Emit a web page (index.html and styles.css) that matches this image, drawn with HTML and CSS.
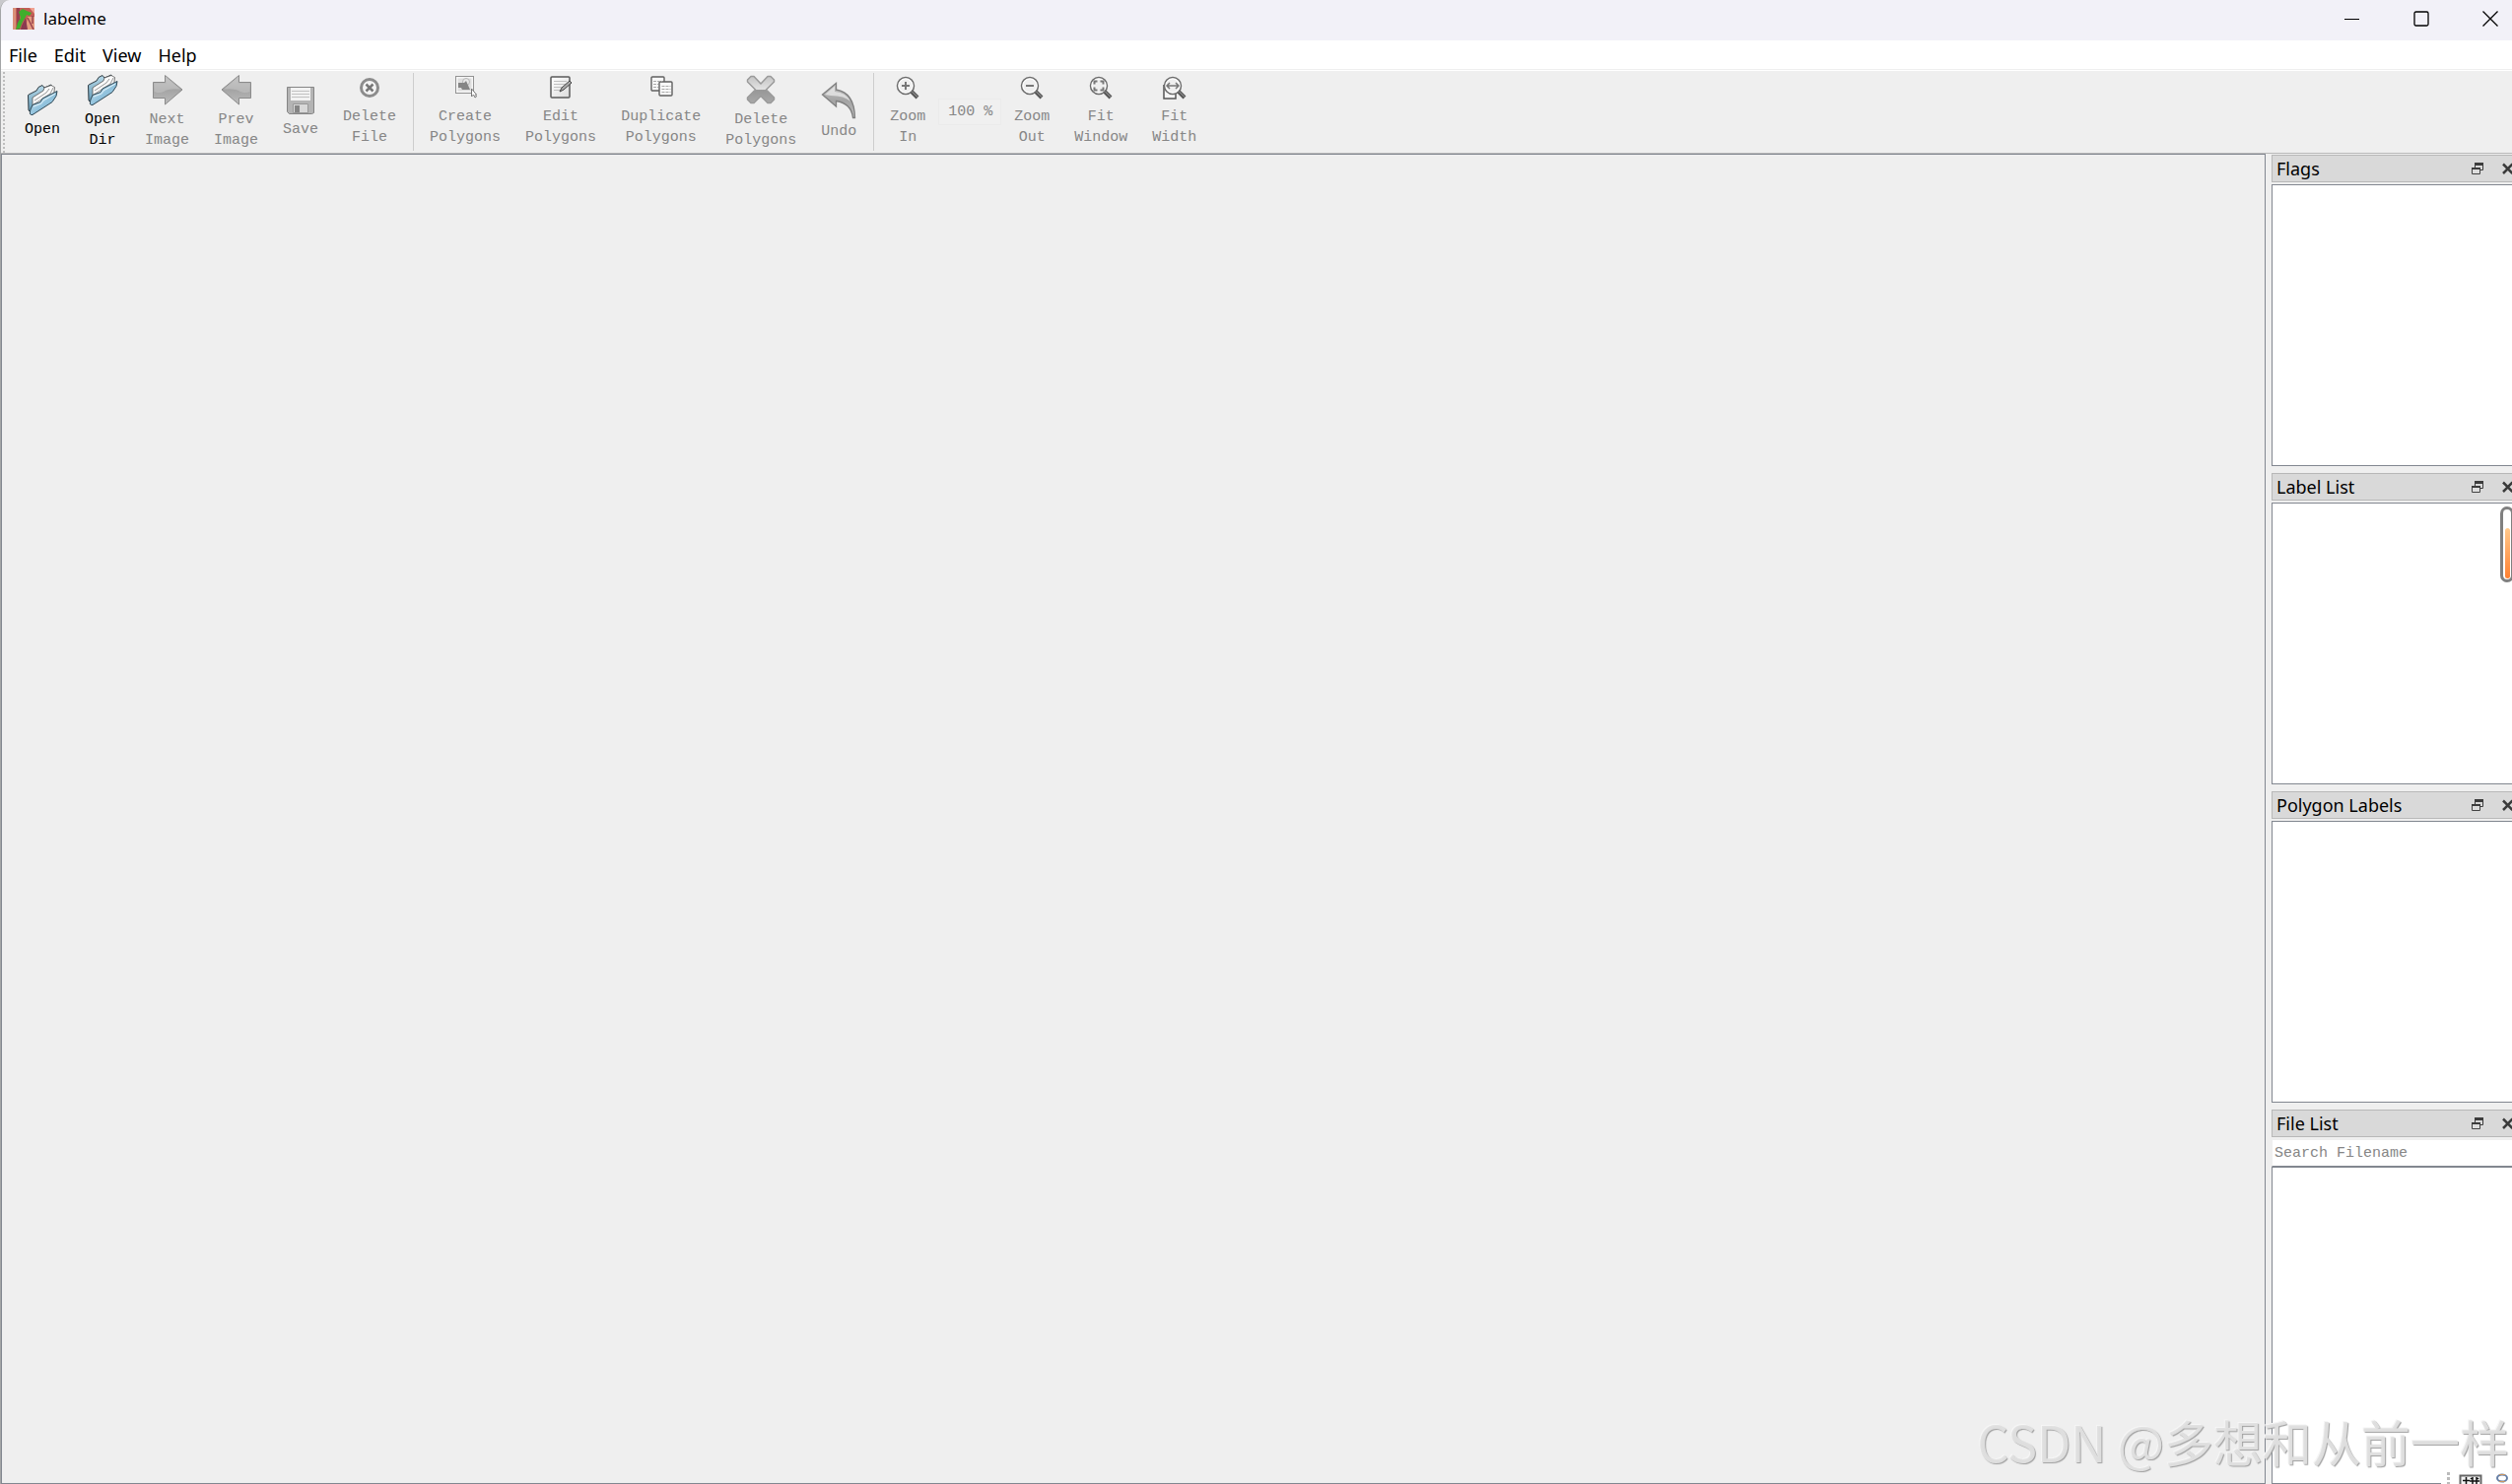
FILE: index.html
```html
<!DOCTYPE html>
<html lang="en">
<head>
<meta charset="utf-8">
<title>labelme</title>
<link rel="stylesheet" href="styles.css">
</head>
<body>
<svg class="defs" aria-hidden="true">
  <defs>
    <linearGradient id="blue" x1="0" y1="0" x2="1" y2="1"><stop offset="0" stop-color="#d8edf6"/><stop offset=".55" stop-color="#8fc1dc"/><stop offset="1" stop-color="#b5dcee"/></linearGradient>
    <linearGradient id="blue2" x1="0" y1="0" x2="0" y2="1"><stop offset="0" stop-color="#b7d9e8"/><stop offset="1" stop-color="#5f97b4"/></linearGradient>
    <linearGradient id="gray" x1="0" y1="0" x2="0" y2="1"><stop offset="0" stop-color="#c6c6c6"/><stop offset=".5" stop-color="#a4a4a4"/><stop offset="1" stop-color="#bcbcbc"/></linearGradient>
    <linearGradient id="cross" x1="0" y1="0" x2="0" y2="1"><stop offset="0" stop-color="#c4c4c4"/><stop offset=".48" stop-color="#e2e2e2"/><stop offset=".52" stop-color="#979797"/><stop offset="1" stop-color="#a8a8a8"/></linearGradient>
    <linearGradient id="sheet" x1="0" y1="0" x2="1" y2="1"><stop offset="0" stop-color="#ffffff"/><stop offset="1" stop-color="#dcdcdc"/></linearGradient>
    <linearGradient id="orange" x1="0" y1="0" x2="0" y2="1"><stop offset="0" stop-color="#ffc98c"/><stop offset="1" stop-color="#ff8030"/></linearGradient>
    <symbol id="folder" viewBox="0 0 32 36">
      <path d="M1.500 11.500 3 10.500 10 7 12 3.500 16 1.500 18 4 25 1l1 3v8L6 31 2 27z" fill="url(#blue2)" stroke="#2f3b42"/>
      <path d="M6 14 17 7l1-3 7-2.500 1.500 1 2 1-1 9L6 28z" fill="#fafafa" stroke="#555" stroke-width=".8"/>
      <path d="M8 17 20 9l3-4M7 21 24 10l3-6" fill="none" stroke="#999"/>
      <path d="M4.500 31.500Q2.500 31 4 26L6 21.500 14 18.500 16 15 31 7.500Q31.500 12 26 18.500L6 31.500z" fill="url(#blue)" stroke="#2f4754"/>
      <path d="M7 23 15 20 17 17 29 10" fill="none" stroke="#e4f4fb"/>
    </symbol>
    <symbol id="arrow" viewBox="0 0 32 36">
      <path d="M1.500 8.500H13.500V1.500L31 16 13.500 31V24.500H1.500z" fill="url(#gray)" stroke="#8b8b8b"/>
      <path d="M2.500 9.500H14.500V4L29 15.500Q17 14.500 12 18 7 20 2.500 18z" fill="#c4c4c4" opacity=".6"/>
    </symbol>
    <symbol id="lens" viewBox="0 0 24 28">
      <path d="M15.500 15.500 22 22" stroke="#555" stroke-width="4"/>
      <path d="M16 15.500 22 21.500" stroke="#aaa" stroke-width="1"/>
      <circle cx="10" cy="10" r="8.500" fill="#efefef" stroke="#6c6c6c" stroke-width="1.500"/>
      <circle cx="10" cy="10" r="7" fill="none" stroke="#fff"/>
    </symbol>
    <symbol id="float" viewBox="0 0 14 14">
      <path d="M4.500 6V2.500h8v6H9" fill="none" stroke="#3c3c3c"/><path d="M4 2.500h9" stroke="#3c3c3c" stroke-width="3"/>
      <path d="M1.500 7.500h8v5h-8z" fill="#ddd" stroke="#444"/><path d="M1 7h9" stroke="#3c3c3c" stroke-width="2"/>
    </symbol>
    <symbol id="close" viewBox="0 0 10 14"><path d="M1 2.500 10.500 12M1 12 10.500 2.500" stroke="#3a3a3a" stroke-width="2.500"/></symbol>
  </defs>
</svg>
<div class="app">
  <header class="titlebar">
    <svg class="logo" viewBox="0 0 22 22" aria-hidden="true"><path d="M0 0h22v22H0z" fill="#c25f56"/><path d="M0 0h3v22H0z" fill="#d99078"/><path d="M4 0h3v22H4z" fill="#96404f"/><path d="M15 9h7v13h-9z" fill="#e59c80"/><path d="M17 0h5v6z" fill="#f0a090"/><path d="M9 18l4-8 2 12H8z" fill="#8a3a50"/><path d="M15 10l6 12M20 8v8" stroke="#9a4450" stroke-width="1.500"/><path d="M6 4l4-3 4 2 5 2-2 3-3-1-2 4-2 3-3 7-4 1 2-7 3-5z" fill="#3fae2c"/></svg>
    <h1 class="title">labelme</h1>
    <div class="controls">
      <button class="wbtn" aria-label="Minimize"><svg width="16" height="16"><path d="M0 8.500h15" stroke="#000"/></svg></button>
      <button class="wbtn" aria-label="Maximize"><svg width="16" height="16"><rect x="1" y="1" width="14" height="14" rx="1.500" fill="none" stroke="#000" stroke-width="1.300"/></svg></button>
      <button class="wbtn" aria-label="Close"><svg width="16" height="16"><path d="M.5.500l15 15M15.500.500l-15 15" stroke="#000" stroke-width="1.300"/></svg></button>
    </div>
  </header>
  <nav class="menubar">
    <button class="menu">File</button><button class="menu">Edit</button><button class="menu">View</button><button class="menu">Help</button>
  </nav>
  <div class="toolbar" role="toolbar" aria-label="Tools">
    <span class="grip"></span>
    <button class="tool"><svg class="lg"><use href="#folder"/></svg>Open</button>
    <button class="tool"><svg class="lg"><use href="#folder"/></svg>Open<br>Dir</button>
    <button class="tool" disabled><svg class="lg"><use href="#arrow"/></svg>Next<br>Image</button>
    <button class="tool" disabled><svg class="lg flip"><use href="#arrow"/></svg>Prev<br>Image</button>
    <button class="tool" disabled><svg class="lg" viewBox="0 0 32 36"><path d="M2.500 3.500h27v26l-2 1h-23l-2-2z" fill="#b4b4b4" stroke="#858585"/><path d="M6 4h20v13H6z" fill="#f2f2f2"/><path d="M7 7.500h18M7 10.500h18M7 13.500h18" stroke="#c2c2c2"/><path d="M8.500 20.500h15v9h-15z" fill="#d8d8d8" stroke="#999"/><path d="M10 22h5v7h-5z" fill="#858585"/></svg>Save</button>
    <button class="tool" disabled><svg class="sm" viewBox="0 2 24 30"><circle cx="12" cy="13" r="8.500" fill="#f4f4f4" stroke="#8c8c8c" stroke-width="3"/><path d="M8.500 9.500l7 7M15.500 9.500l-7 7" stroke="#777" stroke-width="2.500"/></svg>Delete<br>File</button>
    <span class="sep"></span>
    <button class="tool" disabled><svg class="sm" viewBox="0 4 24 30"><path d="M2.500 3.500h18v17h-18z" fill="#f6f6f6" stroke="#333" stroke-dasharray="1 1"/><path d="M4.500 5.500h14v13h-14z" fill="#dedede"/><circle cx="13" cy="9" r="3.500" fill="#e8e8e8" stroke="#b5b5b5"/><path d="M5 10h6l2-2 4 9H9l-1-2H5z" fill="#858585"/><path d="M18.500 16v8l2-2 1.500 3 1.500-1-1-2h1z" fill="#fff" stroke="#777"/></svg>Create<br>Polygons</button>
    <button class="tool" disabled><svg class="sm" viewBox="0 3 24 30"><rect x="2" y="3" width="19" height="21" rx="1" fill="url(#sheet)" stroke="#5b5b5b" stroke-width="1.500"/><path d="M5 7.500h13M5 10.500h12M5 13.500h9M5 16.500h7" stroke="#c0c0c0"/><path d="M11 18l2-4 8-7 2 2-8 7z" fill="#aaa" stroke="#444"/></svg>Edit<br>Polygons</button>
    <button class="tool" disabled><svg class="sm" viewBox="0 3 24 30"><g fill="#f8f8f8" stroke="#606060" stroke-width="1.400"><rect x="2" y="3" width="13" height="14" rx="1"/><rect x="10" y="8" width="13" height="14" rx="1"/></g><path d="M4 7.500h9M4 10.500h5M4 13.500h5M12.500 12.500h9M12.500 15.500h9M12.500 18.500h9" stroke="#aaa" stroke-dasharray="3 1"/></svg>Duplicate<br>Polygons</button>
    <button class="tool" disabled><svg class="lg" viewBox="0 1 32 36"><path d="M6 3.500h3l7 7.500 7-7.500h3l3.500 3.500v2l-8 8 8 8v2L26 30.500h-3L16 23.500 9 30.500H6L2.500 27v-2l8-8-8-8V7z" fill="url(#cross)" stroke="#9a9a9a" stroke-width="1.500" stroke-linejoin="round"/></svg>Delete<br>Polygons</button>
    <button class="tool" disabled><svg class="xl" viewBox="0 0 36 40"><path d="M1.500 13 15.500 1.500V8Q34 11 34.500 36.500H32.500Q31 22 15.500 19.500V25z" fill="url(#gray)" stroke="#808080" stroke-width="1.300"/><path d="M4 13 14 4.500V10Q26 11 30 20 24 14 10 14z" fill="#eee" opacity=".7"/></svg>Undo</button>
    <span class="sep"></span>
    <button class="tool" disabled><svg class="sm" viewBox="0 1 24 30"><use href="#lens" width="24" height="28"/><path d="M10 6v8M6 10h8" stroke="#777" stroke-width="2"/></svg>Zoom<br>In</button>
    <input class="zoom" aria-label="Zoom level" value="100 %" disabled>
    <button class="tool" disabled><svg class="sm" viewBox="0 1 24 30"><use href="#lens" width="24" height="28"/><path d="M6 10h8" stroke="#777" stroke-width="2"/></svg>Zoom<br>Out</button>
    <button class="tool" disabled><svg class="sm" viewBox="0 1 24 30"><use href="#lens" width="24" height="28"/><path d="M5.500 8.500v-3h3M11.500 5.500h3v3M14.500 11.500v3h-3M8.500 14.500h-3v-3" fill="none" stroke="#777" stroke-width="2"/></svg>Fit<br>Window</button>
    <button class="tool" disabled><svg class="sm" viewBox="0 1 24 30"><path d="M1 9v14h12v-5" fill="#f6f6f6" stroke="#555" stroke-width="1.500"/><use href="#lens" width="24" height="28"/><path d="M4 10h12M7 7l-3 3 3 3M13 7l3 3-3 3" fill="none" stroke="#777" stroke-width="1.500"/></svg>Fit<br>Width</button>
  </div>
  <div class="work">
    <main class="canvas"></main>
    <aside class="docks">
      <section class="dock"><header class="dockhead"><h2>Flags</h2><button aria-label="Float Flags"><svg width="14" height="14"><use href="#float"/></svg></button><button aria-label="Close Flags"><svg width="10" height="14"><use href="#close"/></svg></button></header><div class="list"></div></section>
      <section class="dock"><header class="dockhead"><h2>Label List</h2><button aria-label="Float Label List"><svg width="14" height="14"><use href="#float"/></svg></button><button aria-label="Close Label List"><svg width="10" height="14"><use href="#close"/></svg></button></header><div class="list">
        <svg class="gauge" viewBox="0 0 12 78" aria-hidden="true"><rect x="1.500" y="1.500" width="11" height="74" rx="5.500" fill="#fff" stroke="#808080" stroke-width="3"/><rect x="5" y="22" width="5" height="51" rx="2.500" fill="url(#orange)"/></svg></div></section>
      <section class="dock"><header class="dockhead"><h2>Polygon Labels</h2><button aria-label="Float Polygon Labels"><svg width="14" height="14"><use href="#float"/></svg></button><button aria-label="Close Polygon Labels"><svg width="10" height="14"><use href="#close"/></svg></button></header><div class="list"></div></section>
      <section class="dock files"><header class="dockhead"><h2>File List</h2><button aria-label="Float File List"><svg width="14" height="14"><use href="#float"/></svg></button><button aria-label="Close File List"><svg width="10" height="14"><use href="#close"/></svg></button></header>
        <input class="search" type="text" placeholder="Search Filename" aria-label="Search Filename"><div class="list"></div></section>
    </aside>
  </div>
  <svg class="ime" viewBox="0 0 72 12" aria-hidden="true"><path d="M0 0h72v12H0z" fill="#fff"/><path d="M6 0h3v3H6zM6 5h3v3H6zM6 10h3v2H6z" fill="#bbb"/><path d="M19.500 12V3.500h21V12" fill="#f4f4f4" stroke="#666" stroke-width="2"/><path d="M22 8.500h7M25.500 5v7M29 9h10M32 5v7M36 5v7M30 6l1 1M38 6l-1 1" stroke="#111" stroke-width="1.500"/><ellipse cx="62" cy="6" rx="5" ry="3.500" fill="none" stroke="#667fa5" stroke-width="2"/><path d="M59 2.500h6M59 9.500h6" stroke="#c79460"/></svg>
  <div class="watermark">CSDN @多想和从前一样</div>
</div>
</body>
</html>
```
FILE: styles.css
```css
* { box-sizing: border-box; }

body {
  margin: 0;
  background: #c9c9cc;
  font-family: "Noto Sans", "Open Sans", sans-serif;
  color: #000;
}

button {
  margin: 0;
  padding: 0;
  border: 0;
  background: none;
  font: inherit;
  color: inherit;
}

h1, h2 { margin: 0; font-weight: 400; }

svg { display: block; flex: none; }

.defs { position: absolute; width: 0; height: 0; }

.app {
  position: relative;
  display: flex;
  flex-direction: column;
  height: 100vh;
  overflow: hidden;
  background: #efefef;
  border-left: 1px solid #a3a5a6;
  border-top-left-radius: 10px;
}

.titlebar {
  display: flex;
  align-items: center;
  flex: none;
  height: 41px;
  padding: 0 14px 4px 12px;
  background: #f2f1f8;
}

.logo { width: 22px; height: 22px; }

.title {
  flex: 1;
  margin-left: 9px;
  font-size: 17px;
  line-height: 24px;
}

.controls { display: flex; gap: 54px; }

.wbtn { width: 16px; height: 16px; }

.menubar {
  display: flex;
  flex: none;
  gap: 17px;
  height: 31px;
  padding-left: 8px;
  background: linear-gradient(#efefef, #efefef) 0 29px / 100% 1px no-repeat #fff;
  font-size: 18px;
  line-height: 30px;
}

.menu { height: 30px; }

.toolbar {
  display: flex;
  align-items: center;
  flex: none;
  gap: 1px;
  height: 84px;
  border-bottom: 1px solid #b8b8b8;
  font-family: "Liberation Mono", monospace;
  font-size: 15px;
  line-height: 21px;
}

.grip {
  width: 11px;
  height: 82px;
  background: repeating-linear-gradient(#bdbdbd 0 2px, transparent 2px 4px) 2px 0 / 2px 100% no-repeat;
}

.tool {
  display: flex;
  flex-direction: column;
  align-items: center;
  padding: 0 12px;
  text-align: center;
}

.tool svg { overflow: visible; }

.tool:disabled { color: #868686; }

.lg { width: 32px; height: 36px; }
.sm { width: 24px; height: 30px; }
.xl { width: 36px; height: 40px; }
.flip { transform: scaleX(-1); }

.sep {
  width: 8px;
  height: 79px;
  background: linear-gradient(#cdcdcd, #cdcdcd) 4px 0 / 1px 100% no-repeat;
}

.zoom {
  width: 64px;
  height: 27px;
  padding: 0 0 0 9px;
  border: 1px solid #ebebeb;
  background: #f0f0f0;
  color: #868686;
  font: inherit;
}

.work {
  display: flex;
  flex: 1;
  gap: 6px;
  min-height: 0;
}

.canvas {
  flex: 1;
  border: 1px solid #828790;
}

.docks {
  display: flex;
  flex-direction: column;
  gap: 7px;
  width: 244px;
  padding-top: 1px;
}

.dock {
  display: flex;
  flex-direction: column;
  flex: 316 1 0;
  gap: 2px;
  min-height: 0;
}

.files { flex-grow: 380; gap: 0; }

.dockhead {
  display: flex;
  align-items: center;
  flex: none;
  height: 28px;
  padding-left: 4px;
  border: 1px solid #b8b8b8;
  border-right: 0;
  background: #d9d9d9;
  font-size: 18px;
  line-height: 28px;
}

.dockhead h2 {
  flex: 1;
  font-size: inherit;
  white-space: nowrap;
}

.dockhead button + button { margin-left: 18px; }

.list {
  position: relative;
  flex: 1;
  border: 1px solid #828790;
  border-right: 0;
  background: #fff;
}

.gauge {
  position: absolute;
  right: 0;
  top: 3px;
  width: 12px;
  height: 78px;
}

.search {
  flex: none;
  width: 100%;
  height: 27px;
  margin: 3px 0 0;
  padding: 0 2px;
  border: 0;
  border-left: 1px solid #efefef;
  border-bottom: 1px solid #828790;
  background: #fff;
  font-family: "Liberation Mono", monospace;
  font-size: 15px;
}

.search::placeholder { color: #868686; opacity: 1; }

.ime {
  position: absolute;
  right: 0;
  bottom: 0;
  width: 72px;
  height: 12px;
}

.watermark {
  position: absolute;
  right: 3px;
  bottom: 12px;
  font-family: "Noto Sans CJK SC", sans-serif;
  font-weight: 400;
  font-size: 50px;
  line-height: 64px;
  white-space: nowrap;
  color: rgba(226, 226, 226, .95);
  text-shadow: 1px 1px 1px #a0a0a0, -1px -1px 0 #f6f6f6;
  pointer-events: none;
}
```
